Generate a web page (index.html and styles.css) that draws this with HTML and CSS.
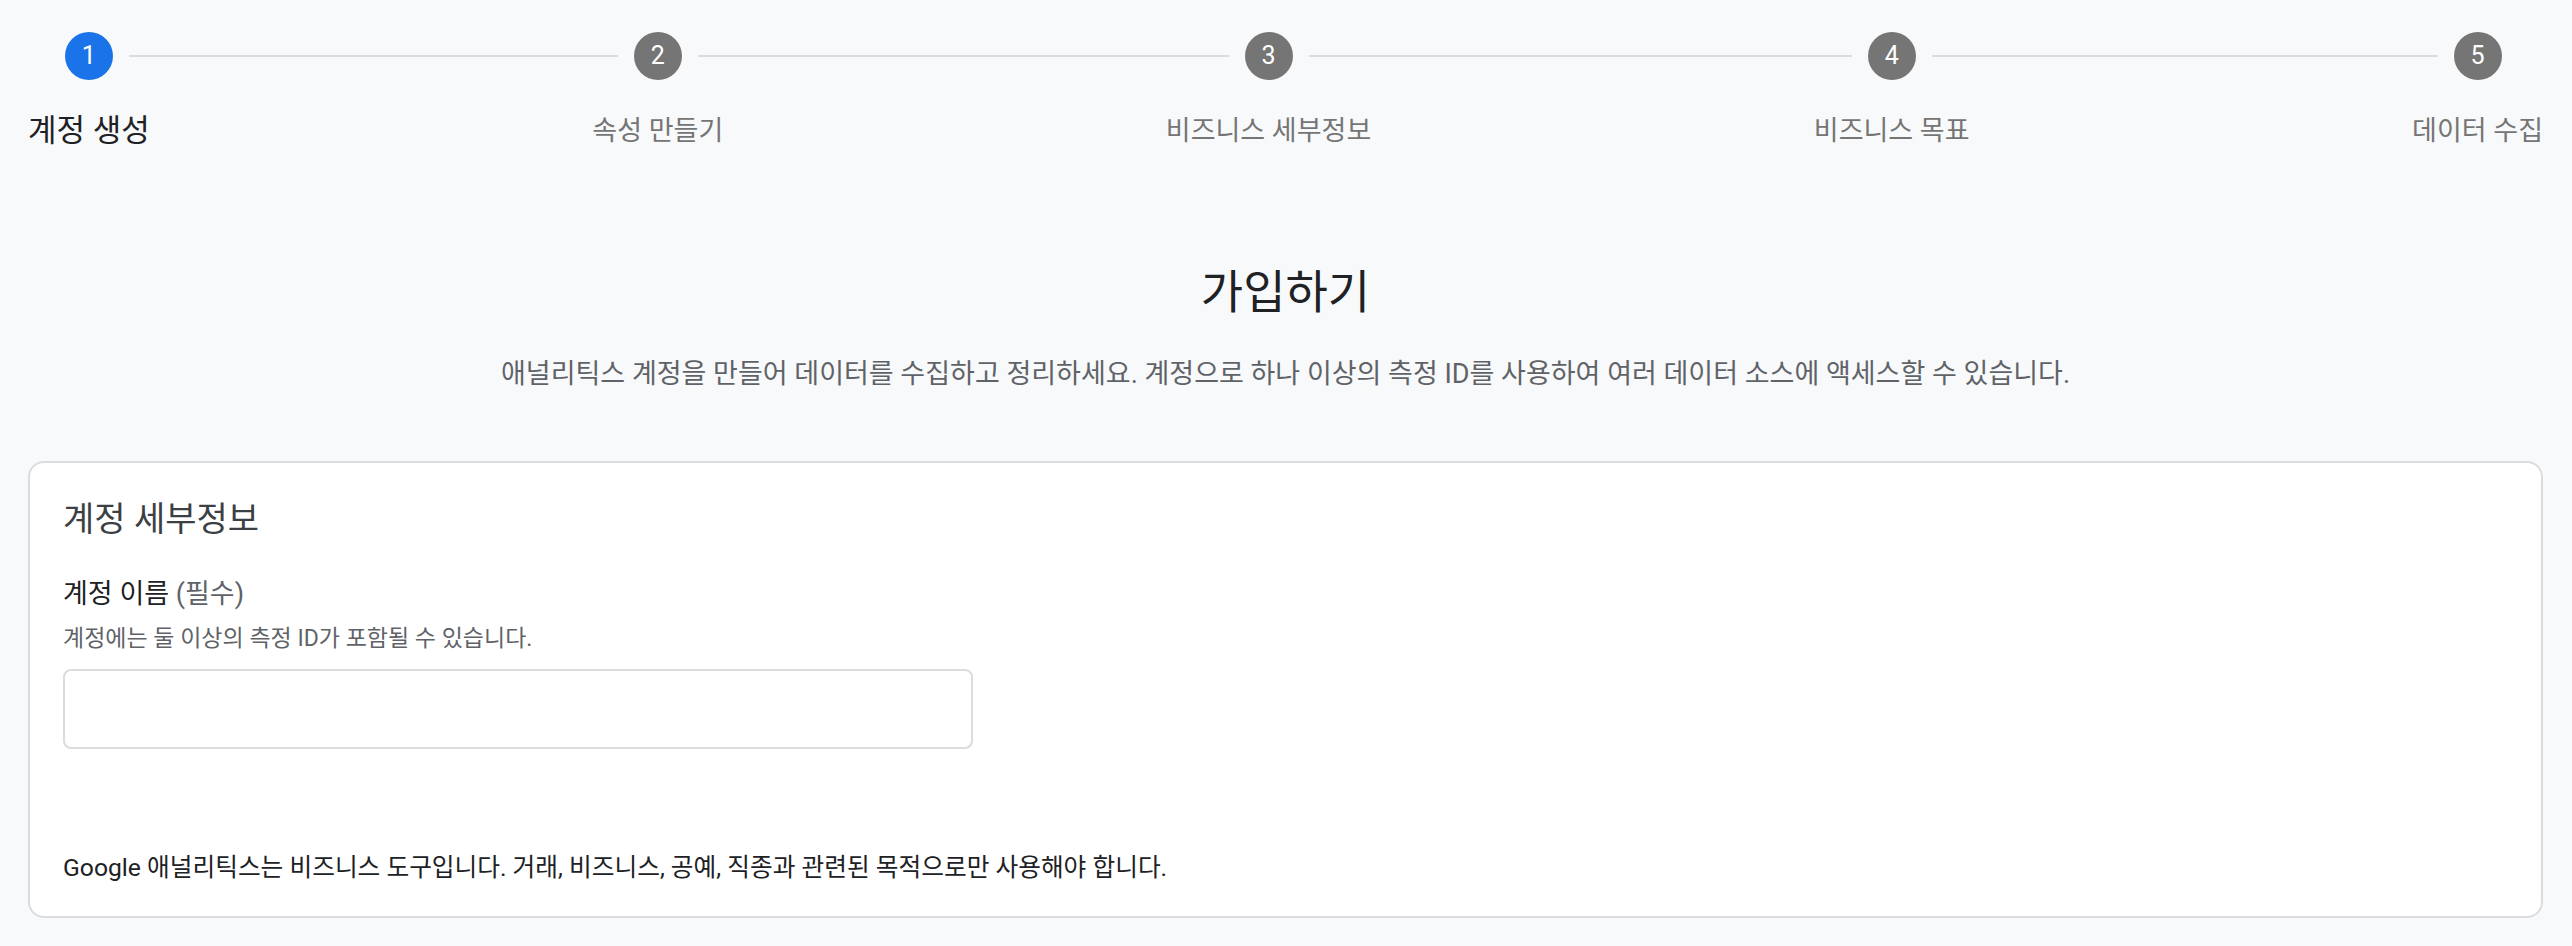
FILE: index.html
```html
<!DOCTYPE html>
<html lang="ko">
<head>
<meta charset="utf-8">
<title>가입하기</title>
<link rel="stylesheet" href="styles.css">
</head>
<body>
<div class="page">
  <div class="stepper">
    <div class="step active">
      <div class="step-head"><span class="seg seg-left off"></span><span class="circle">1</span><span class="seg seg-right"></span></div>
      <div class="step-label">계정 생성</div>
    </div>
    <div class="connector"></div>
    <div class="step">
      <div class="step-head"><span class="seg seg-left"></span><span class="circle">2</span><span class="seg seg-right"></span></div>
      <div class="step-label">속성 만들기</div>
    </div>
    <div class="connector"></div>
    <div class="step">
      <div class="step-head"><span class="seg seg-left"></span><span class="circle">3</span><span class="seg seg-right"></span></div>
      <div class="step-label">비즈니스 세부정보</div>
    </div>
    <div class="connector"></div>
    <div class="step">
      <div class="step-head"><span class="seg seg-left"></span><span class="circle">4</span><span class="seg seg-right"></span></div>
      <div class="step-label">비즈니스 목표</div>
    </div>
    <div class="connector"></div>
    <div class="step">
      <div class="step-head"><span class="seg seg-left"></span><span class="circle">5</span><span class="seg seg-right off"></span></div>
      <div class="step-label">데이터 수집</div>
    </div>
  </div>

  <h1 class="title">가입하기</h1>
  <p class="subtitle">애널리틱스 계정을 만들어 데이터를 수집하고 정리하세요. 계정으로 하나 이상의 측정 ID를 사용하여 여러 데이터 소스에 액세스할 수 있습니다.</p>

  <section class="card">
    <h2 class="card-title">계정 세부정보</h2>
    <div class="field-label">계정 이름 <span class="req">(필수)</span></div>
    <div class="field-help">계정에는 둘 이상의 측정 ID가 포함될 수 있습니다.</div>
    <input class="text-input" type="text" aria-label="계정 이름">
    <p class="notice">Google 애널리틱스는 비즈니스 도구입니다. 거래, 비즈니스, 공예, 직종과 관련된 목적으로만 사용해야 합니다.</p>
  </section>
</div>
</body>
</html>
```

FILE: styles.css
```css
html, body {
  margin: 0;
  padding: 0;
  background: #f8f9fa;
}

body {
  font-family: Roboto, "Noto Sans CJK KR", sans-serif;
  color: #202124;
}

.page {
  padding: 32px 29px 0 28px;
}

/* Stepper */
.stepper {
  display: flex;
  align-items: flex-start;
}

.step {
  display: flex;
  flex-direction: column;
  flex: none;
}

.step-head {
  display: flex;
  align-items: center;
  height: 48px;
}

.seg {
  flex: 1;
  height: 2px;
  background: #dadce0;
}

.seg-left {
  margin-right: 16px;
}

.seg-right {
  margin-left: 16px;
}

.seg.off {
  visibility: hidden;
}

.circle {
  flex: none;
  width: 48px;
  height: 48px;
  border-radius: 50%;
  background: #757575;
  color: #fff;
  font-size: 25px;
  line-height: 48px;
  text-align: center;
}

.step.active .circle {
  background: #1a73e8;
}

.connector {
  flex: 1;
  height: 2px;
  margin-top: 23px;
  background: #dadce0;
}

.step-label {
  margin-top: 33px;
  font-size: 27px;
  line-height: 36px;
  color: #757575;
  white-space: nowrap;
  text-align: center;
}

.step.active .step-label {
  font-size: 31px;
  color: #202124;
}

/* Heading */
.title {
  margin: 115px 0 0;
  font-size: 46px;
  font-weight: 400;
  line-height: 56px;
  text-align: center;
  color: #202124;
}

.subtitle {
  margin: 38px 0 0;
  font-size: 27px;
  line-height: 32px;
  text-align: center;
  color: #5f6368;
}

/* Card */
.card {
  margin-top: 71px;
  background: #fff;
  border: 2px solid #dadce0;
  border-radius: 16px;
  padding: 36px 33px 32px;
}

.card-title {
  margin: 0;
  font-size: 34px;
  font-weight: 400;
  line-height: 40px;
  color: #3c4043;
}

.field-label {
  margin-top: 39px;
  font-size: 27px;
  line-height: 32px;
  color: #202124;
}

.req {
  color: #5f6368;
}

.field-help {
  margin-top: 15px;
  font-size: 23px;
  line-height: 28px;
  color: #5f6368;
}

.text-input {
  display: block;
  box-sizing: border-box;
  margin-top: 16px;
  width: 910px;
  height: 80px;
  border: 2px solid #dadce0;
  border-radius: 8px;
  background: #fff;
  font: inherit;
  font-size: 24px;
  padding: 0 20px;
  outline: none;
}

.notice {
  margin: 103px 0 0;
  font-size: 24.7px;
  line-height: 32px;
  color: #202124;
}
```
